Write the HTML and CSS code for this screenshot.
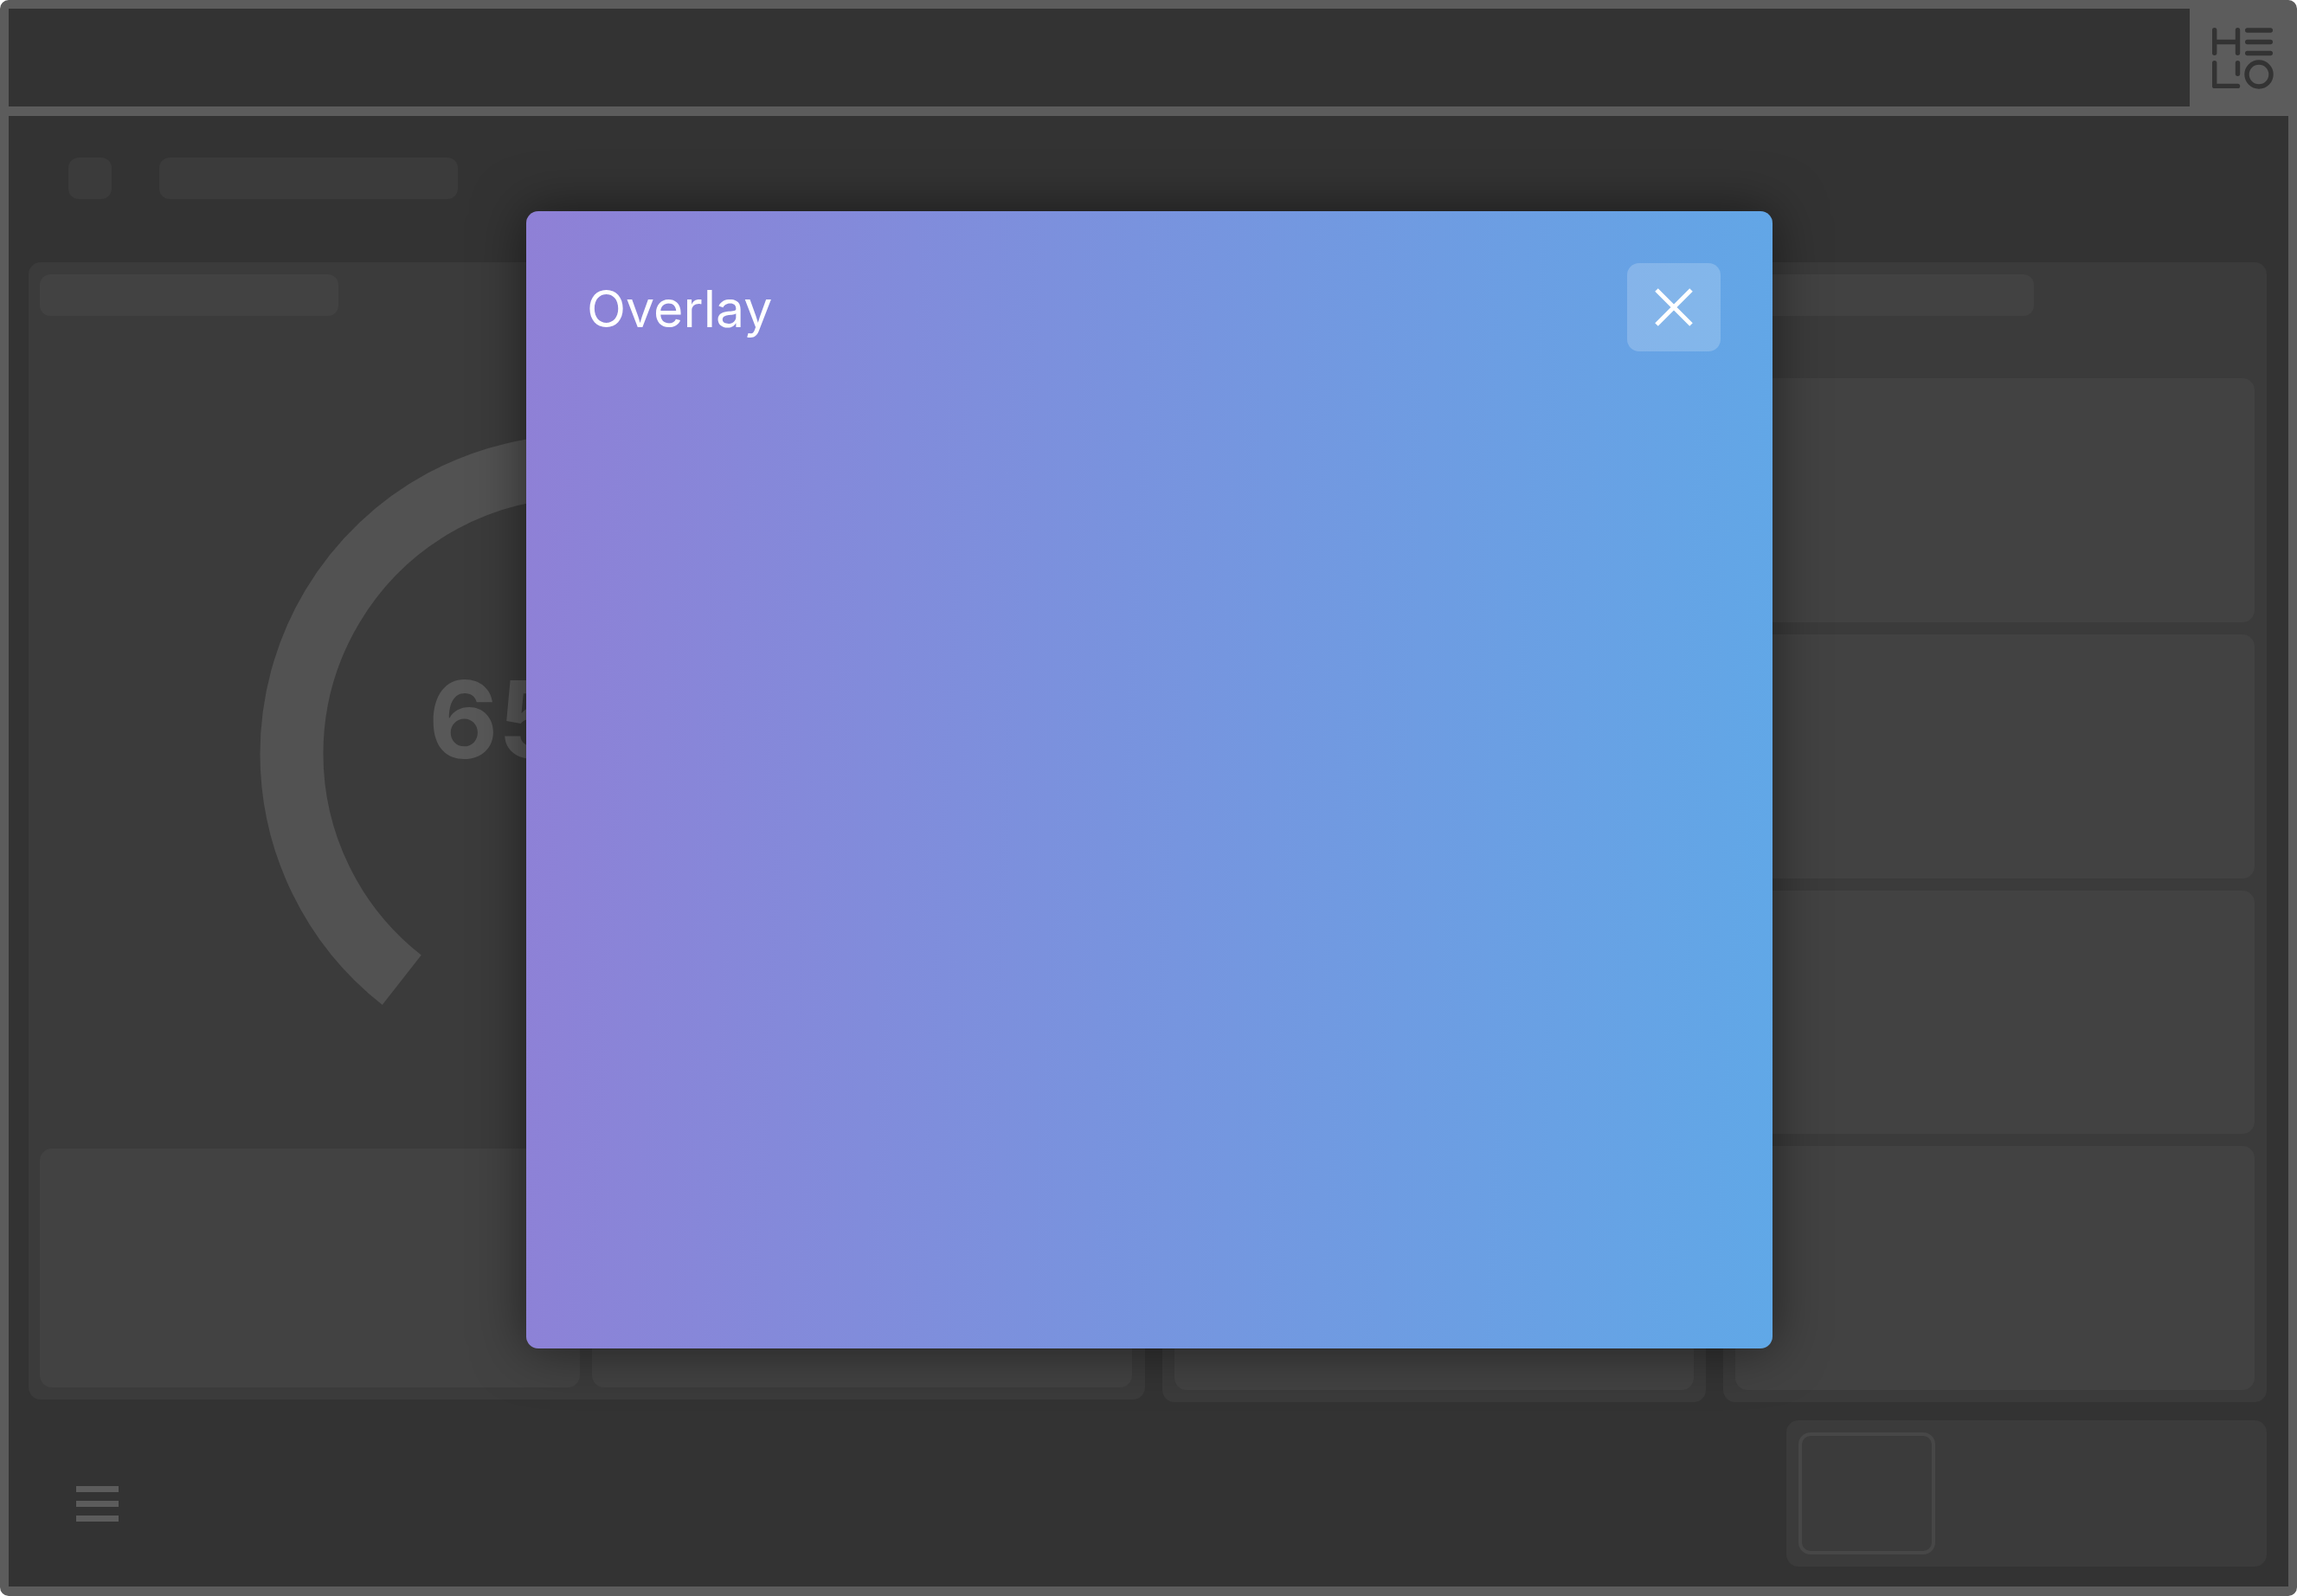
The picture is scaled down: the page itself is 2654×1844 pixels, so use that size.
FILE: index.html
```html
<!DOCTYPE html>
<html lang="en">
<head>
    <meta charset="UTF-8">
    <meta name="viewport" content="width=device-width, initial-scale=1.0">
    <title>Overlay</title>
    <link rel="stylesheet" href="styles.css">
</head>
<body>
    <div class="frame">
        <header class="topbar">
            <div class="topbar-fill"></div>
            <div class="logo-cell">
                <svg class="logo" viewBox="0 0 72 72" width="72" height="72">
                    <path d="M3.7 3.7V30.3M30.5 3.7V30.3M3.7 17.5H30.5M41.7 4H68.3M41.7 17.5H68.3M41.7 30.5H68.3M3.7 41.7V68.4H30.5M30.5 41.7V54.3"/>
                    <circle cx="55" cy="55" r="14"/>
                </svg>
            </div>
        </header>

        <main class="dashboard">
            <div class="title-row">
                <div class="chip chip-icon"></div>
                <div class="chip chip-title"></div>
            </div>

            <div class="panels">
                <section class="panel panel-gauge">
                    <div class="chip panel-chip"></div>
                    <svg class="gauge" viewBox="0 0 1261 962">
                        <path class="gauge-arc" d="M418.25 767.3A332 332 0 0 1 291 506A332 332 0 0 1 805 228.4"/>
                        <text class="gauge-value" x="449" y="511">65%</text>
                    </svg>
                    <div class="card-row">
                        <div class="card"></div>
                        <div class="card"></div>
                    </div>
                </section>
                <section class="panel panel-list">
                    <div class="chip panel-chip"></div>
                    <div class="card"></div>
                    <div class="card"></div>
                    <div class="card"></div>
                    <div class="card"></div>
                </section>
                <section class="panel panel-list">
                    <div class="chip panel-chip"></div>
                    <div class="card"></div>
                    <div class="card"></div>
                    <div class="card"></div>
                    <div class="card"></div>
                </section>
            </div>

            <div class="bottom-row">
                <div class="menu-icon">
                    <span></span>
                    <span></span>
                    <span></span>
                </div>
                <div class="status-panel">
                    <div class="status-box"></div>
                </div>
            </div>
        </main>
    </div>

    <div class="modal">
        <div class="modal-header">
            <h2 class="modal-title">Overlay</h2>
            <button class="modal-close" type="button" aria-label="Close">
                <svg viewBox="0 0 44 44" width="44" height="44">
                    <path d="M2 2L42 42M42 2L2 42"/>
                </svg>
            </button>
        </div>
    </div>
</body>
</html>
```

FILE: styles.css
```css
* { margin: 0; padding: 0; box-sizing: border-box; }
body {
    font-family: 'Inter', 'Liberation Sans', sans-serif;
    background: #fff;
}
.frame {
    width: 2654px;
    height: 1844px;
    display: flex;
    flex-direction: column;
    background: #333;
    border: solid #5c5c5c;
    border-width: 10px 10px 11px 10px;
    border-radius: 10px;
    overflow: hidden;
}
.topbar {
    display: flex;
    height: 124px;
    flex-shrink: 0;
    border-bottom: 11px solid #5c5c5c;
}
.topbar-fill { flex: 1; }
.logo-cell {
    width: 114px;
    display: flex;
    align-items: center;
    padding-left: 25px;
    background: #5c5c5c;
}
.logo path, .logo circle {
    fill: none;
    stroke: #333;
    stroke-width: 5.4;
    stroke-linecap: round;
    stroke-linejoin: round;
}
.dashboard {
    flex: 1;
    display: flex;
    flex-direction: column;
    padding: 48px 25px 23px 23px;
}
.chip {
    height: 48px;
    border-radius: 12px;
    background: #3b3b3b;
}
.title-row {
    display: flex;
    gap: 55px;
    padding-left: 46px;
    margin-bottom: 73px;
}
.chip-icon { width: 50px; }
.chip-title { width: 345px; }
.panels {
    display: grid;
    grid-template-columns: 1290px 628px 628px;
    column-gap: 20px;
    height: 1317px;
    align-items: start;
}
.panel {
    display: flex;
    flex-direction: column;
    height: 100%;
    padding: 14px;
    border-radius: 14px;
    background: #3b3b3b;
}
.panel-chip {
    width: 345px;
    background: #424242;
    flex-shrink: 0;
}
.card {
    flex: 1;
    border-radius: 14px;
    background: #424242;
}
.panel-gauge {
    height: 1314px;
    padding-left: 13px;
    padding-right: 15px;
}
.gauge {
    width: 1261px;
    height: 962px;
    flex-shrink: 0;
}
.gauge-arc {
    fill: none;
    stroke: #525252;
    stroke-width: 73;
}
.gauge-value {
    font-size: 124px;
    font-weight: 700;
    fill: #585858;
}
.card-row {
    flex: 1;
    display: flex;
    gap: 14px;
}
.panel-list { gap: 14px; }
.panel-list .panel-chip { margin-bottom: 58px; }
.bottom-row {
    flex: 1;
    display: flex;
    justify-content: space-between;
    align-items: flex-end;
    padding-left: 55px;
}
.menu-icon {
    display: flex;
    flex-direction: column;
    gap: 10px;
    margin-bottom: 52px;
}
.menu-icon span {
    width: 49px;
    height: 7px;
    background: #5c5c5c;
}
.status-panel {
    width: 555px;
    height: 169px;
    padding: 14px;
    border-radius: 14px;
    background: #3b3b3b;
}
.status-box {
    width: 158px;
    height: 141px;
    border: 4px solid #474747;
    border-radius: 14px;
}
.modal {
    position: fixed;
    top: 244px;
    left: 608px;
    width: 1440px;
    height: 1314px;
    padding: 60px 60px 0 70px;
    border-radius: 14px;
    background: linear-gradient(93deg, #8f80d6, #60a8e7);
    box-shadow: 0 0 60px rgba(0, 0, 0, 0.5);
}
.modal-header {
    display: flex;
    justify-content: space-between;
    align-items: center;
}
.modal-title {
    padding-top: 2px;
    font-size: 59px;
    font-weight: 400;
    color: #fff;
}
.modal-close {
    width: 108px;
    height: 102px;
    display: flex;
    align-items: center;
    justify-content: center;
    border: none;
    border-radius: 14px;
    background: rgba(255, 255, 255, 0.2);
}
.modal-close path {
    fill: none;
    stroke: #fff;
    stroke-width: 5;
}
```
